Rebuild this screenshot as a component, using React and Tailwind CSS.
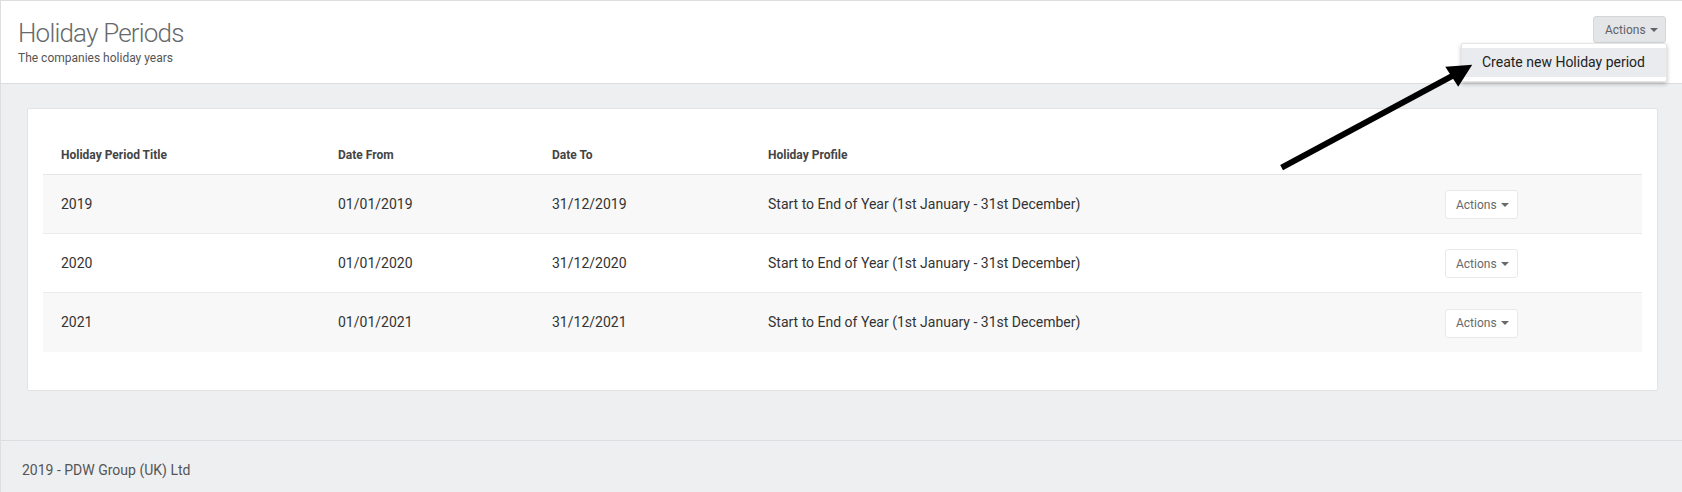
import React from "react";

// Holiday period rows
const PERIODS = [
  { title: "2019", from: "01/01/2019", to: "31/12/2019" },
  { title: "2020", from: "01/01/2020", to: "31/12/2020" },
  { title: "2021", from: "01/01/2021", to: "31/12/2021" },
];

const PROFILE = "Start to End of Year (1st January - 31st December)";

const COLS = "grid grid-cols-[277px_214px_216px_677px_1fr]";

function Caret() {
  return (
    <span className="ml-[4px] inline-block w-0 h-0 border-x-[4px] border-x-transparent border-t-[4px] border-t-current" />
  );
}

function RowActions() {
  return (
    <button className="flex items-center h-[29px] w-[73px] pl-[10px] bg-white border border-[#e7eaec] rounded-[3px] text-[12px] text-[#676a6c]">
      Actions
      <Caret />
    </button>
  );
}

export default function App() {
  return (
    <div className="relative w-full h-[492px] overflow-hidden flex flex-col bg-[#eeeff1] border-l border-t border-[#dedede] font-['Roboto',sans-serif]">
      {/* Page heading */}
      <header className="relative bg-white h-[83px] shrink-0 border-b border-[#dcdde0] pl-[17px] pr-[16px] flex justify-between">
        <div className="pt-[19px]">
          <h2 className="text-[26px] leading-[26px] font-light tracking-[-0.8px] text-[#676a6c]">Holiday Periods</h2>
          <p className="mt-[4px] text-[12px] leading-[16px] text-[#555]">The companies holiday years</p>
        </div>
        <div className="pt-[15px]">
          <button className="flex items-center h-[27px] w-[73px] pl-[11px] bg-[#e4e5e7] border border-[#d5d6d8] rounded-[3px] text-[12px] text-[#5f6266]">
            Actions
            <Caret />
          </button>
        </div>

        {/* Open dropdown */}
        <div className="absolute top-[42px] right-[15px] w-[206px] bg-white pt-[4px] pb-[4px] rounded-[2px] shadow-[0_2px_4px_rgba(0,0,0,0.25)] border border-[#e5e5e5]">
          <div className="h-[29px] flex items-center pl-[20px] bg-[#e9ebee] text-[14px] text-[#222]">
            Create new Holiday period
          </div>
        </div>
      </header>

      {/* Content */}
      <main className="flex-1 pt-[24px] pl-[26px] pr-[24px]">
        <section className="bg-white border border-[#e2e3e5] rounded-[2px] px-[15px] pt-[38px] pb-[38px]">
          <div className={`${COLS} border-b border-[#e4e5e7] pb-[11px] text-[12px] leading-[16px] font-bold text-[#444]`}>
            <div className="pl-[18px]">Holiday Period Title</div>
            <div className="pl-[18px]">Date From</div>
            <div className="pl-[18px]">Date To</div>
            <div className="pl-[18px]">Holiday Profile</div>
            <div />
          </div>
          {PERIODS.map((p, i) => (
            <div
              key={p.title}
              className={`${COLS} items-center h-[59px] text-[14px] text-[#333] ${i % 2 === 0 ? "bg-[#f8f8f8]" : "bg-white"} ${i < PERIODS.length - 1 ? "border-b border-[#ebebeb]" : ""}`}
            >
              <div className="pl-[18px]">{p.title}</div>
              <div className="pl-[18px]">{p.from}</div>
              <div className="pl-[18px]">{p.to}</div>
              <div className="pl-[18px]">{PROFILE}</div>
              <div className="pl-[18px] pt-[1px]">
                <RowActions />
              </div>
            </div>
          ))}
        </section>
      </main>

      {/* Footer */}
      <footer className="h-[52px] shrink-0 border-t border-[#dcdde0] pl-[21px] pt-[19px] text-[14px] leading-[20px] text-[#555]">
        2019 - PDW Group (UK) Ltd
      </footer>

      {/* Annotation arrow */}
      <svg className="absolute inset-0 w-full h-full pointer-events-none" viewBox="0 0 1682 492">
        <line x1="1282" y1="167" x2="1455" y2="74" stroke="#000" strokeWidth="6" />
        <polygon points="1473,64 1446,66 1459,86" fill="#000" />
      </svg>
    </div>
  );
}
